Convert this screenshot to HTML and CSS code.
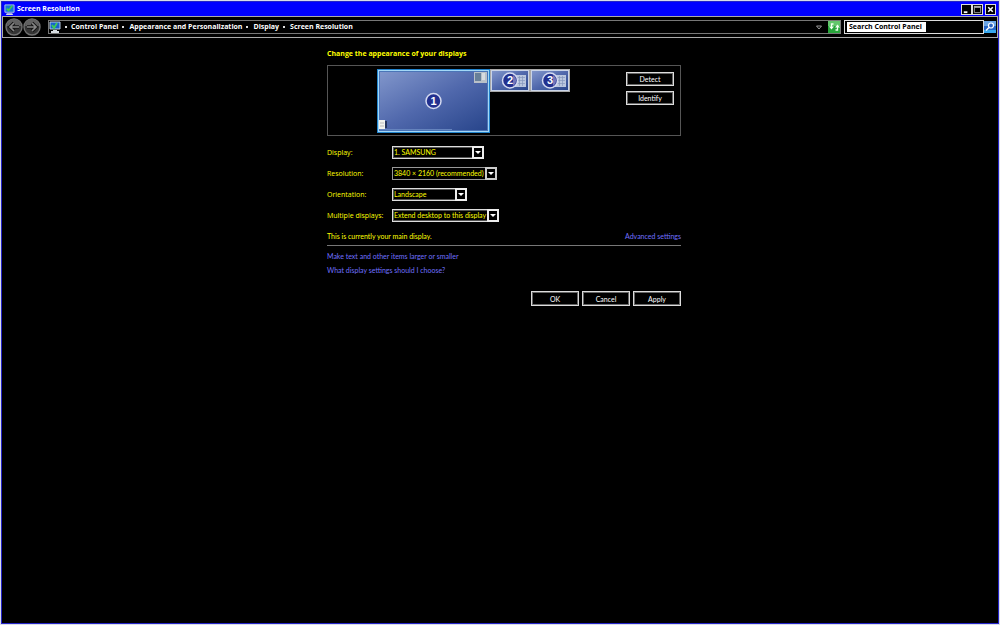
FILE: index.html
```html
<!DOCTYPE html>
<html lang="en">
<head>
<meta charset="utf-8">
<meta name="viewport" content="width=device-width, initial-scale=1">
<title>Screen Resolution</title>
<link rel="stylesheet" href="styles.css">
</head>
<body>
<div class="window">
  <header class="titlebar">
    <svg class="title-icon" viewBox="0 0 12 12" aria-hidden="true"><path d="M1 1h10v8H1z" fill="#1674d8" stroke="#b5cbe0"/><path d="M3 5l2 2 4-5" fill="none" stroke="#3fd045" stroke-width="1.700"/><path d="M3 10h6l1 2H2z" fill="#d8dde2"/></svg>
    <h1 class="title">Screen Resolution</h1>
    <div class="window-controls">
      <button class="control" aria-label="Minimize"><svg viewBox="0 0 10 10"><path d="M2 7h4v2H2z" fill="#fff"/></svg></button>
      <button class="control" aria-label="Maximize"><svg viewBox="0 0 10 10"><path d="M1.5 2.5h7v6h-7z" fill="none" stroke="#aaa"/><path d="M1 1h8v2H1z" fill="#aaa"/></svg></button>
      <button class="control control-close" aria-label="Close"><svg viewBox="0 0 10 10"><path d="M2.5 2.5l5 5m0-5l-5 5" stroke="#fff" stroke-width="1.7"/></svg></button>
    </div>
  </header>

  <nav class="navbar" aria-label="Location">
    <div class="history">
      <button class="round" aria-label="Back"><svg viewBox="0 0 18 18"><circle cx="9" cy="9" r="8" fill="#343434" stroke="#707070" stroke-width="1.4"/><path d="M2 8a7 7 0 0 1 14 0z" fill="#626262"/><path d="M14 9H5m4-4L5 9l4 4" fill="none" stroke="#141414" stroke-width="3.6"/><path d="M14 9H5m4-4L5 9l4 4" fill="none" stroke="#858585" stroke-width="1.7"/></svg></button>
      <button class="round" aria-label="Forward"><svg viewBox="0 0 18 18"><circle cx="9" cy="9" r="8" fill="#343434" stroke="#707070" stroke-width="1.4"/><path d="M2 8a7 7 0 0 1 14 0z" fill="#626262"/><path d="M4 9h9M9 5l4 4-4 4" fill="none" stroke="#141414" stroke-width="3.6"/><path d="M4 9h9M9 5l4 4-4 4" fill="none" stroke="#858585" stroke-width="1.7"/></svg></button>
    </div>
    <div class="address">
      <svg class="path-icon" viewBox="0 0 12 12" aria-hidden="true"><path d="M1 1h10v7H1z" fill="#1760cf" stroke="#b9cce4"/><path d="M3 4l2 3 3-5" fill="none" stroke="#3cc957" stroke-width="1.8"/><path d="M4 9h4v1h2v2H2v-2h2z" fill="#d8dde2"/></svg>
      <ol class="crumbs">
        <li><a href="#">Control Panel</a></li>
        <li><a href="#">Appearance and Personalization</a></li>
        <li><a href="#">Display</a></li>
        <li><a href="#">Screen Resolution</a></li>
      </ol>
      <button class="history-toggle" aria-label="Previous locations"><svg viewBox="0 0 6 5"><path d="M.5 1h5L3 4z" fill="none" stroke="#bbb" stroke-width=".8"/></svg></button>
      <button class="refresh" aria-label="Refresh"><svg viewBox="0 0 12 12"><path d="M0 0h12v12H0z" fill="#27a53a"/><path d="M0 0h12v5H0z" fill="#62c66b"/><path d="M5.500 3H3.500v3M9.500 6v3h-2" fill="none" stroke="#f0fff0" stroke-width="1.3"/><path d="M1 5.500h5L3.500 8.500zM7 6.500h5L9.500 3.500z" fill="#f0fff0"/></svg></button>
    </div>
    <form class="search">
      <label class="search-box"><input class="search-input" type="text" aria-label="Search Control Panel" placeholder="Search Control Panel"></label>
      <button class="search-button" type="button" aria-label="Search"><svg viewBox="0 0 12 12"><path d="M0 0h12v12H0z" fill="#2465c8"/><path d="M0 0h12v5H0z" fill="#6aa5e8"/><path d="M0 9h12v3H0z" fill="#37a8ee"/><circle cx="7" cy="4.500" r="2.500" fill="#2d65c4" stroke="#fff" stroke-width="1.2"/><path d="M5 6.500L2 9.500" stroke="#fff" stroke-width="1.500"/></svg></button>
    </form>
  </nav>

  <main class="content">
    <h2 class="heading">Change the appearance of your displays</h2>
    <section class="preview" aria-label="Display arrangement">
      <div class="monitors">
        <button class="monitor monitor-main" aria-label="Display 1">
          <svg viewBox="0 0 113 64">
            <defs><linearGradient id="screen" x1="0" y1="0" x2="1" y2="1"><stop offset="0" stop-color="#8196cb"/><stop offset=".5" stop-color="#5068ac"/><stop offset="1" stop-color="#28458b"/></linearGradient></defs>
            <path d="M0 0h113v64H0z" fill="#2384cc"/><path d="M1 1h111v62H1z" fill="#a3d8f7"/><path d="M2 2h109v60H2z" fill="#4a75b8"/><path d="M3 3h107v58H3z" fill="url(#screen)"/>
            <path d="M3 60h72v1H3z" fill="#6583bd"/>
            <path d="M97 3h13v11H97z" fill="#b9c0c8"/><path d="M98 4h6v8h-6z" fill="#688099"/><path d="M105 4h3v7h-3z" fill="#d8dce0"/>
            <path d="M2 51h6v9H2z" fill="#f3f3ee"/><path d="M3 54h4M3 57h4" stroke="#bbb"/><path d="M8 52h2v7H8z" fill="#26365f"/>
            <circle cx="56.500" cy="32" r="7.500" fill="#22308f" stroke="#d4daf0" stroke-width="1.500"/>
            <text class="monitor-number" x="56.500" y="36">1</text>
          </svg>
        </button>
        <button class="monitor monitor-side" aria-label="Display 2">
          <svg viewBox="0 0 40 23"><path d="M0 0h40v23H0z" fill="#aaa"/><path d="M1 1h38v21H1z" fill="#c9d4e8"/><path d="M2 2h36v19H2z" fill="url(#screen)"/><path d="M25 6h11v12H25z" fill="#b9c6de"/><path d="M26 8.500h9M26 11.500h9M26 14.500h9M29.500 7v10M32.500 7v10" stroke="#8496bd" stroke-width=".7"/><circle cx="20" cy="11.500" r="7.500" fill="#22308f" stroke="#d4daf0" stroke-width="1.500"/><path d="M23 6a6.500 6.500 0 0 1 0 11z" fill="#7277bb"/><text class="monitor-number" x="20" y="15">2</text></svg>
        </button>
        <button class="monitor monitor-side" aria-label="Display 3">
          <svg viewBox="0 0 40 23"><path d="M0 0h40v23H0z" fill="#aaa"/><path d="M1 1h38v21H1z" fill="#c9d4e8"/><path d="M2 2h36v19H2z" fill="url(#screen)"/><path d="M25 6h11v12H25z" fill="#b9c6de"/><path d="M26 8.500h9M26 11.500h9M26 14.500h9M29.500 7v10M32.500 7v10" stroke="#8496bd" stroke-width=".7"/><circle cx="20" cy="11.500" r="7.500" fill="#22308f" stroke="#d4daf0" stroke-width="1.500"/><path d="M23 6a6.500 6.500 0 0 1 0 11z" fill="#7277bb"/><text class="monitor-number" x="20" y="15">3</text></svg>
        </button>
      </div>
      <div class="preview-actions">
        <button class="button">Detect</button>
        <button class="button">Identify</button>
      </div>
    </section>

    <form class="settings">
      <label for="display">Display:</label>
      <div class="picker picker-medium"><select id="display"><option>1. SAMSUNG</option></select><svg class="arrow" viewBox="0 0 12 13" aria-hidden="true"><path d="M1 1h10v11H1z" fill="#000" stroke="#eee" stroke-width="2"/><path d="M3 5h6L6 8z" fill="#fff"/></svg></div>
      <label for="resolution">Resolution:</label>
      <div class="picker picker-wide picker-tight"><select id="resolution"><option>3840 × 2160 (recommended)</option></select><svg class="arrow" viewBox="0 0 12 13" aria-hidden="true"><path d="M1 1h10v11H1z" fill="#000" stroke="#ccc" stroke-width="2"/><path d="M3 5h6L6 8z" fill="#fff"/></svg></div>
      <label for="orientation">Orientation:</label>
      <div class="picker picker-narrow"><select id="orientation"><option>Landscape</option></select><svg class="arrow" viewBox="0 0 12 13" aria-hidden="true"><path d="M1 1h10v11H1z" fill="#000" stroke="#eee" stroke-width="2"/><path d="M3 5h6L6 8z" fill="#fff"/></svg></div>
      <label for="multiple">Multiple displays:</label>
      <div class="picker picker-widest"><select id="multiple"><option>Extend desktop to this display</option></select><svg class="arrow" viewBox="0 0 12 13" aria-hidden="true"><path d="M1 1h10v11H1z" fill="#000" stroke="#eee" stroke-width="2"/><path d="M3 5h6L6 8z" fill="#fff"/></svg></div>
    </form>

    <div class="status"><p>This is currently your main display.</p><a href="#">Advanced settings</a></div>
    <div class="links">
      <a href="#">Make text and other items larger or smaller</a>
      <a href="#">What display settings should I choose?</a>
    </div>
    <footer class="actions">
      <button class="button">OK</button>
      <button class="button">Cancel</button>
      <button class="button">Apply</button>
    </footer>
  </main>
</div>
</body>
</html>
```
FILE: styles.css
```css
* { box-sizing: border-box; }

body {
  margin: 0;
  background: #000;
  color: #ff0;
  font: 7px/10px Lato, "Noto Sans", sans-serif;
}

button, input, select { font: inherit; color: inherit; margin: 0; }
button { padding: 0; border: 0; background: none; }
svg { display: block; }
a { color: #7070ff; text-decoration: none; }
h1, h2, p { margin: 0; font-size: inherit; }

.window {
  min-height: 100vh;
  border: 1px solid #d8dce8;
  outline: 1px solid #2424c8;
  outline-offset: -2px;
  padding: 1px;
}

.title, .navbar, .heading { font: bold 7px/10px "Open Sans", "Noto Sans", sans-serif; }

.titlebar {
  display: flex;
  align-items: center;
  height: 14px;
  padding: 0 2px;
  background: #00f;
  color: #fff;
}

.title-icon { width: 11px; height: 11px; }
.title { flex: 1; padding-left: 2px; }
.window-controls { display: flex; }
.control { width: 11px; height: 11px; border: 1px solid #ddd; background: #000; }
.control svg { width: 9px; height: 9px; }
.control-close { margin-left: 2px; }

.navbar {
  display: flex;
  align-items: center;
  height: 22px;
  padding-right: 1px;
  border: 1px solid #aaa;
  color: #fff;
}

.history { display: flex; padding-left: 2px; }
.round, .round svg { width: 18px; height: 18px; }

.address {
  display: flex;
  flex: 1;
  align-items: center;
  height: 14px;
  margin-left: 7px;
  border: 1px solid #777;
}

.path-icon { width: 12px; height: 12px; }
.crumbs { display: flex; flex: 1; margin: 0; padding: 0; list-style: none; }
.crumbs li { display: flex; align-items: center; }
.crumbs li::before { content: ""; width: 2px; height: 2px; margin: 0 4px; background: #ddd; }
.crumbs li + li::before { margin: 0 5px 0 4px; }
.crumbs a { color: #fff; }
.history-toggle svg { width: 6px; height: 5px; }
.refresh { margin-left: 6px; }
.refresh svg { width: 12px; height: 12px; }

.search { display: flex; align-items: center; width: 152px; height: 14px; margin-left: 3px; }
.search-box { display: flex; flex: 1; align-items: center; height: 14px; border: 1px solid #ddd; }
.search-input { width: 100%; height: 10px; padding: 0 4px; border: 0; outline: 0; background: linear-gradient(#fff, #fff) 2px 0 / 79px 100% no-repeat; }
.search-input::placeholder { color: #000; opacity: 1; }
.search-button svg { width: 12px; height: 12px; }

.content { max-width: 362px; margin: 0 auto; padding: 11px 0 0 8px; }

.preview {
  display: flex;
  justify-content: space-between;
  height: 71px;
  margin-top: 6px;
  padding: 3px 6px 3px 49px;
  border: 1px solid #555;
}

.monitors { display: flex; align-items: flex-start; }
.monitor-main svg { width: 113px; height: 64px; }
.monitor-side svg { width: 40px; height: 23px; }
.monitor-number { fill: #fff; font: bold 11px "Liberation Sans", Arial, sans-serif; text-anchor: middle; }

.button {
  width: 48px;
  height: 14px;
  border: 1px solid #ddd;
  background: #000;
  box-shadow: inset 0 0 0 1px #666;
  color: #fff;
  line-height: 10px;
}
.preview-actions { display: flex; flex-direction: column; gap: 5px; padding-top: 3px; }

.settings {
  display: grid;
  grid-template-columns: 65px 1fr;
  grid-auto-rows: 13px;
  align-items: center;
  row-gap: 8px;
  margin-top: 10px;
}
.settings label { font-family: "Open Sans", "Noto Sans", sans-serif; }

.picker { position: relative; height: 13px; }
.picker select {
  width: 100%;
  height: 13px;
  padding: 0 11px 0 1px;
  border: 1px solid #ddd;
  border-radius: 0;
  background: #000;
  box-shadow: inset 0 0 0 1px #555;
  appearance: none;
  line-height: 11px;
}
.picker-tight select { border-color: #999; box-shadow: none; }
.picker-medium { width: 92px; }
.picker-wide { width: 105px; }
.picker-narrow { width: 75px; }
.picker-widest { width: 107px; }
.arrow { position: absolute; top: 0; right: 0; width: 12px; height: 13px; pointer-events: none; }

.status {
  display: flex;
  justify-content: space-between;
  margin-top: 9px;
  padding-bottom: 4px;
  border-bottom: 1px solid #777;
}

.links { display: flex; flex-direction: column; align-items: flex-start; gap: 4px; margin-top: 5px; }
.actions { display: flex; justify-content: flex-end; gap: 3px; margin-top: 16px; }
.actions .button { height: 15px; }
```
